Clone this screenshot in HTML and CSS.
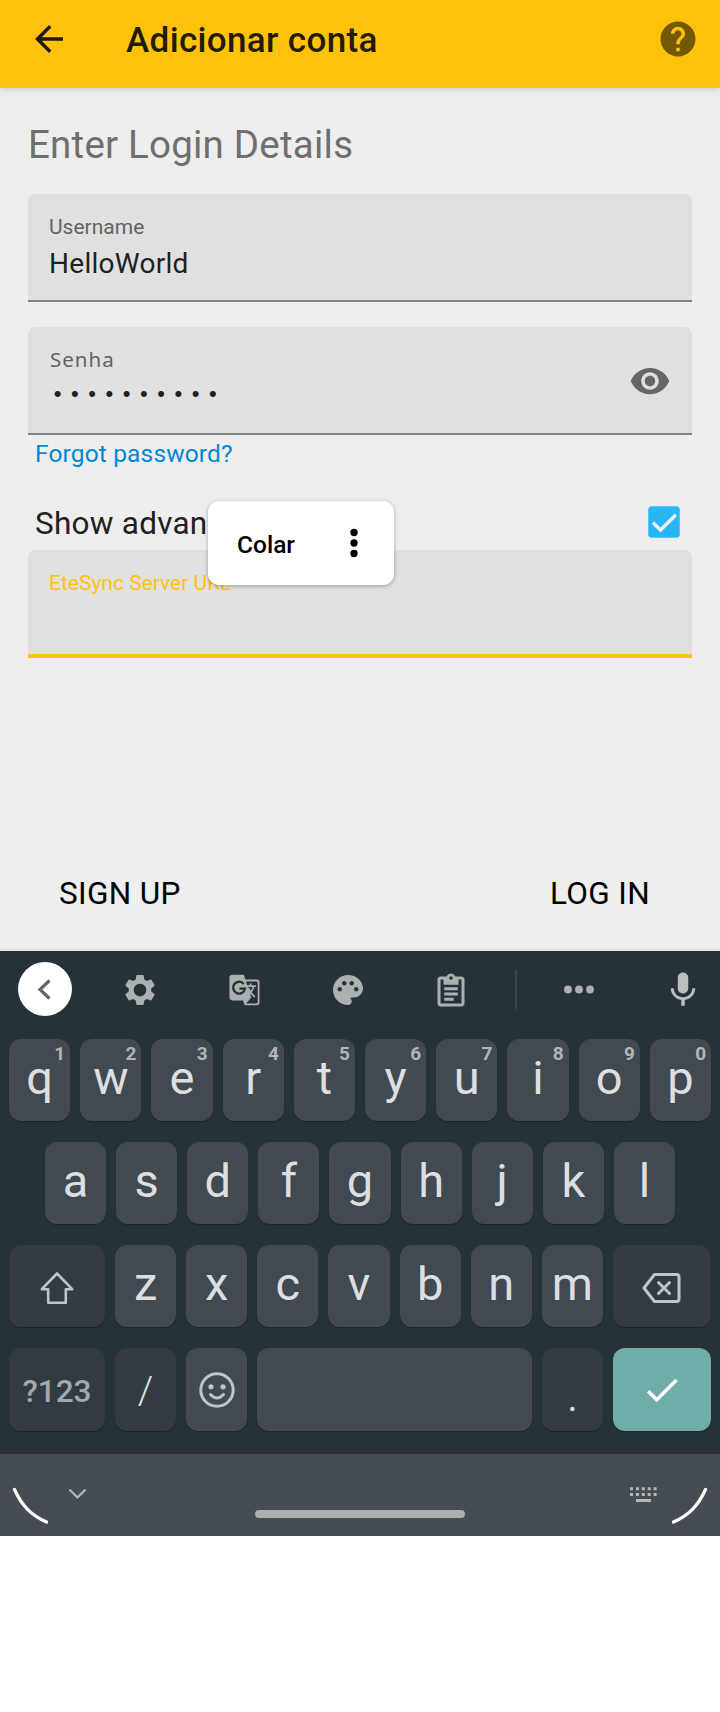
FILE: index.html
```html
<!DOCTYPE html>
<html lang="pt">
<head>
<meta charset="utf-8">
<title>Adicionar conta</title>
<link rel="stylesheet" href="styles.css">
</head>
<body>
<header class="appbar">
  <svg class="i42" viewBox="0 0 24 24"><path d="M20 11H7.83l5.59-5.59L12 4l-8 8 8 8 1.41-1.41L7.83 13H20z"/></svg>
  <h1 class="title">Adicionar conta</h1>
  <svg class="i42 help" viewBox="0 0 24 24"><path d="M12 2C6.48 2 2 6.48 2 12s4.48 10 10 10 10-4.48 10-10S17.52 2 12 2zm1 17h-2v-2h2v2zm2.07-7.75l-.9.92C13.45 12.9 13 13.5 13 15h-2v-.5c0-1.1.45-2.1 1.17-2.83l1.24-1.26c.37-.36.59-.86.59-1.41 0-1.1-.9-2-2-2s-2 .9-2 2H8c0-2.21 1.79-4 4-4s4 1.79 4 4c0 .88-.36 1.68-.93 2.25z"/></svg>
</header>
<main class="form">
  <h2 class="heading">Enter Login Details</h2>
  <div class="field">
    <div class="stack"><span class="label">Username</span><span class="value">HelloWorld</span></div>
  </div>
  <div class="field second">
    <div class="stack"><span class="label senha">Senha</span><span class="value dots">••••••••••</span></div>
    <svg class="i42 eye" viewBox="0 0 24 24"><path d="M12 4.5C7 4.5 2.73 7.61 1 12c1.73 4.39 6 7.5 11 7.5s9.27-3.11 11-7.5c-1.73-4.39-6-7.5-11-7.5zM12 17c-2.76 0-5-2.24-5-5s2.24-5 5-5 5 2.24 5 5-2.24 5-5 5zm0-8c-1.66 0-3 1.34-3 3s1.34 3 3 3 3-1.34 3-3-1.34-3-3-3z"/></svg>
  </div>
  <a class="forgot">Forgot password?</a>
  <div class="advanced">
    <span class="adv-text">Show advan</span>
    <svg class="i42 check" viewBox="0 0 24 24"><rect x="3" y="3" width="18" height="18" rx="2"/><path d="M5.700 12.300L10 16.600L18.800 7.800" fill="none" stroke="#eee" stroke-width="2"/></svg>
    <div class="popup"><span>Colar</span><svg class="i42" viewBox="0 0 24 24"><circle cx="12" cy="6" r="2.100"/><circle cx="12" cy="12" r="2.100"/><circle cx="12" cy="18" r="2.100"/></svg></div>
  </div>
  <div class="field active">
    <div class="stack"><span class="label">EteSync Server URL</span></div>
  </div>
  <div class="actions"><span>SIGN UP</span><span>LOG IN</span></div>
</main>
<section class="keyboard">
  <div class="tools">
    <div class="collapse"><svg viewBox="0 0 54 54"><path d="M31.500 18.500L22 27.500l9.500 9" fill="none" stroke="#666" stroke-width="3.200"/></svg></div>
    <svg class="i36 gear" viewBox="0 0 24 24"><path d="M19.430 12.980c.04-.32.07-.64.07-.98s-.03-.66-.07-.98l2.110-1.650c.19-.15.24-.42.12-.64l-2-3.460c-.12-.22-.39-.3-.61-.22l-2.490 1c-.52-.4-1.080-.73-1.690-.98l-.38-2.650C14.460 2.180 14.250 2 14 2h-4c-.25 0-.46.18-.49.42l-.38 2.650c-.61.25-1.170.59-1.690.98l-2.490-1c-.23-.09-.49 0-.61.22l-2 3.460c-.13.22-.07.49.12.64l2.110 1.650c-.04.32-.07.65-.07.98s.03.66.07.98l-2.110 1.650c-.19.15-.24.42-.12.64l2 3.460c.12.22.39.3.61.22l2.490-1c.52.4 1.080.73 1.690.98l.38 2.650c.03.24.24.42.49.42h4c.25 0 .46-.18.49-.42l.38-2.650c.61-.25 1.170-.59 1.690-.98l2.490 1c.23.09.49 0 .61-.22l2-3.460c.12-.22.07-.49-.12-.64l-2.110-1.650zM12 16.200c-2.300 0-4.200-1.900-4.200-4.200s1.900-4.200 4.200-4.200 4.200 1.900 4.200 4.200-1.900 4.200-4.200 4.200z"/></svg>
    <svg class="i36 translate" viewBox="0 0 26 26"><path fill-rule="evenodd" d="M4.500 2h8.300l1.200 3.500h8.200q2 0 2 2v14.500q0 2-2 2H13.500L12.300 20.500H4.500q-2 0-2-2V4q0-2 2-2zM14.400 6.800L18.200 18.500l-3.600 4.200h7.400q.9 0 .9-.9V7.700q0-.9-.9-.9z"/><path d="M12.800 8.600A4.300 4.300 0 1 0 13.700 12H9.700" fill="none" stroke="#263238" stroke-width="1.700"/><path d="M14 10.200h7.600M17.800 8.300v1.900M20 10.200q-1 4.500-5 7M16 11.500q1.500 4 4.800 6.500" fill="none" stroke="#abb0b3" stroke-width="1.300"/></svg>
    <svg class="i36 palette" viewBox="0 0 24 24"><path d="M12 2C6.490 2 2 6.490 2 12s4.490 10 10 10c1.380 0 2.500-1.120 2.500-2.500 0-.61-.23-1.200-.64-1.670-.08-.1-.13-.21-.13-.33 0-.28.22-.5.5-.5H16c3.310 0 6-2.690 6-6 0-4.960-4.490-9-10-9zm-5.500 11c-.83 0-1.500-.67-1.500-1.500S5.670 10 6.500 10s1.500.67 1.500 1.500S7.330 13 6.500 13zm3-4C8.670 9 8 8.330 8 7.500S8.670 6 9.500 6s1.500.67 1.500 1.500S10.330 9 9.500 9zm5 0c-.83 0-1.500-.67-1.500-1.500S13.670 6 14.500 6s1.500.67 1.500 1.500S15.330 9 14.500 9zm4.500 2.500c0 .83-.67 1.500-1.500 1.500s-1.500-.67-1.500-1.500.67-1.500 1.500-1.500 1.500.67 1.500 1.500z"/></svg>
    <svg class="i36 clip" viewBox="0 0 24 24"><path fill-rule="evenodd" d="M19 3h-4.180C14.400 1.840 13.300 1 12 1s-2.400.84-2.820 2H5c-1.100 0-2 .9-2 2v16c0 1.100.9 2 2 2h14c1.100 0 2-.9 2-2V5c0-1.100-.9-2-2-2zm-7-.2a1.200 1.200 0 1 1 0 2.400 1.200 1.200 0 0 1 0-2.400zM19 21H5V5h2v3.500h10V5h2v16z"/><path d="M7.500 10.200h9v1.900h-9zM7.500 13.700h9v1.900h-9zM7.500 17.200h6.300v1.900H7.500z"/></svg>
    <span class="divider"></span>
    <svg class="i36 more" viewBox="0 0 36 36"><circle cx="7" cy="17.500" r="3.900"/><circle cx="18" cy="17.500" r="3.900"/><circle cx="29" cy="17.500" r="3.900"/></svg>
    <svg class="i42 mic" viewBox="0 0 24 24"><path d="M12 14c1.660 0 3-1.340 3-3V5c0-1.660-1.340-3-3-3S9 3.340 9 5v6c0 1.660 1.340 3 3 3zm5.300-3c0 3-2.540 5.100-5.300 5.100S6.700 14 6.700 11H5c0 3.410 2.720 6.230 6 6.720V21h2v-3.280c3.280-.48 6-3.300 6-6.720h-1.700z"/></svg>
  </div>
  <div class="row">
    <div class="key">q<sup>1</sup></div><div class="key">w<sup>2</sup></div><div class="key">e<sup>3</sup></div><div class="key">r<sup>4</sup></div><div class="key">t<sup>5</sup></div><div class="key">y<sup>6</sup></div><div class="key">u<sup>7</sup></div><div class="key">i<sup>8</sup></div><div class="key">o<sup>9</sup></div><div class="key">p<sup>0</sup></div>
  </div>
  <div class="row home">
    <div class="key">a</div><div class="key">s</div><div class="key">d</div><div class="key">f</div><div class="key">g</div><div class="key">h</div><div class="key">j</div><div class="key">k</div><div class="key">l</div>
  </div>
  <div class="row">
    <div class="key dim wide icon"><svg class="line shift" viewBox="0 0 36 36"><path d="M18 3.500L2.800 19.200h6.400v13.500h17.600V19.200h6.400z"/></svg></div><div class="key">z</div><div class="key">x</div><div class="key">c</div><div class="key">v</div><div class="key">b</div><div class="key">n</div><div class="key">m</div><div class="key dim wider icon"><svg class="line del" viewBox="0 0 42 36"><path d="M13.500 4.500h22q2.500 0 2.500 2.500v22q0 2.500-2.500 2.500h-22L3 18zM17.500 12.500l11 11m0-11l-11 11"/></svg></div>
  </div>
  <div class="row last">
    <div class="key dim wide sym">?123</div><div class="key dim slash">/</div><div class="key icon smile"><svg class="line face" viewBox="0 0 36 36"><circle cx="18" cy="18" r="16.200"/><path d="M11.500 22.500q6.500 7 13 0"/><circle class="dot" cx="12" cy="14.800" r="2.600"/><circle class="dot" cx="24" cy="14.800" r="2.600"/></svg></div><div class="key space"></div><div class="key dim period">.</div><div class="key wider enter"><svg class="i42" viewBox="0 0 24 24"><path d="M9 16.170L4.830 12l-1.420 1.410L9 19 21 7l-1.410-1.410z"/></svg></div>
  </div>
</section>
<nav class="navbar">
  <svg viewBox="0 0 720 82"><g fill="none"><path d="M14.500 35.500C22 52 31 61 46.500 68M705.500 35.500C698 52 689 61 673.500 68" stroke="#fff" stroke-width="3.200" stroke-linecap="round"/><path d="M69.500 35.500l8 8 8-8" stroke="#b4b8ba" stroke-width="2.200"/><path d="M630 34.700h27M630 40.500h27" stroke="#b4b8ba" stroke-width="3" stroke-dasharray="3 2.900"/><path d="M636 46.500h15" stroke="#b4b8ba" stroke-width="3"/></g><rect x="255" y="56" width="210" height="8" rx="4" fill="#a9aeb0"/></svg>
</nav>
</body>
</html>
```
FILE: styles.css
```css
* { box-sizing: border-box; }
body { margin: 0; width: 720px; height: 1712px; background: #fff; font-family: Roboto, sans-serif; color: #212121; }
svg { display: block; flex: none; }
.i42 { width: 42px; height: 42px; }
.i36 { width: 36px; height: 36px; fill: #abb0b3; }
.appbar { height: 88px; background: #ffc20a; padding: 0 21px 10px 28px; display: flex; align-items: center; box-shadow: 0 2px 5px rgba(0,0,0,.12); position: relative; fill: #1f1a0b; }
.title { margin: 4px 0 0 56px; font-size: 35px; line-height: 42px; font-weight: 500; letter-spacing: .35px; color: #221b06; white-space: nowrap; }
.help { margin-left: auto; fill: #735805; }
.form { height: 863px; background: #eee; padding: 33px 28px 0; }
.heading { margin: 0; font-size: 38.5px; line-height: 48px; font-weight: 400; letter-spacing: .22px; color: #6f6f6f; }
.field { height: 108px; margin-top: 25px; background: #e0e0e0; border-bottom: 2px solid #828282; border-radius: 7px 7px 0 0; padding: 19px 21px 0; display: flex; justify-content: space-between; }
.stack { display: flex; flex-direction: column; }
.label { font-size: 21px; line-height: 28px; color: #636363; }
.value { font-size: 28px; line-height: 36px; margin-top: 5px; letter-spacing: .28px; }
.senha { font-family: "Noto Sans", sans-serif; font-size: 20.500px; line-height: 26px; letter-spacing: 1px; padding-left: 1px; }
.dots { font-family: "Liberation Mono", monospace; font-size: 22px; letter-spacing: 4.040px; padding-left: 2px; margin-top: 6px; }
.eye { margin-top: 14px; fill: #666; }
.forgot { display: block; margin: 4px 7px 0; font-size: 24.500px; line-height: 30px; letter-spacing: .15px; color: #0288d1; }
.advanced { position: relative; height: 42px; margin-top: 32px; padding: 0 7px 0 7px; display: flex; align-items: center; justify-content: space-between; }
.adv-text { font-size: 31.500px; line-height: 42px; letter-spacing: .25px; padding-top: 3px; }
.check { fill: #29b6f6; }
.popup { position: absolute; left: 180px; top: 0; width: 186px; height: 84px; background: #fff; border-radius: 11px; box-shadow: 0 1px 4px rgba(0,0,0,.3); display: flex; align-items: center; justify-content: space-between; padding: 0 19px 0 29px; font-size: 24.500px; font-weight: 500; color: #000; }
.popup span { padding-top: 2px; }
.active { margin-top: 7px; border-bottom: 4px solid #ffc20a; }
.active .label { color: #ffc20a; }
.actions { display: flex; justify-content: space-between; margin-top: 217px; padding: 0 42px 0 31px; font-size: 31.500px; line-height: 38px; letter-spacing: .35px; color: #000; }
.keyboard { height: 503px; background: #263238; padding: 11px 9px 0; box-shadow: 0 -1px 4px rgba(0,0,0,.08); }
.tools { height: 54px; display: flex; align-items: center; margin-left: 9px; }
.tools > svg { margin-top: 2px; }
.collapse { width: 54px; height: 54px; border-radius: 50%; background: #fff; }
.gear { margin-left: 50px; }
.translate { margin: 0 68px; }
.clip { margin-left: 67px; }
.divider { width: 2px; height: 39px; background: #3a454b; margin-left: 46px; }
.more { margin-left: 44px; }
.mic { margin-left: 65px; fill: #b9bec1; }
.row { display: flex; gap: 10px; height: 82px; margin-top: 21px; }
.tools + .row { margin-top: 23px; }
.home { padding: 0 36px; }
.key { position: relative; flex: 1 1 0; background: #424a51; border-radius: 12px; display: flex; justify-content: center; align-items: center; font-size: 47px; line-height: 78px; color: #dcdee0; box-shadow: 0 1px 1px rgba(0,0,0,.3); padding-bottom: 4px; }
.key sup { position: absolute; right: 5px; top: 4px; font-size: 19px; line-height: 22px; font-weight: 700; color: #b1b5b8; }
.dim { background: #313b41; }
.wide { flex: 0 0 96px; }
.wider { flex: 0 0 98px; }
.icon { padding: 3px 0 0; }
.smile { padding: 0; }
.last { height: 83px; }
.sym { font-size: 31.500px; font-weight: 500; color: #a3a8ac; padding: 5px 0 0; }
.slash { font-size: 39px; font-weight: 300; padding: 2px 0 0; }
.period { font-size: 38px; padding: 16px 0 0; }
.space { flex: 0 0 275px; }
.enter { background: #6fada8; fill: #fff; padding: 0; }
.line { width: 36px; height: 36px; fill: none; stroke: #c0c4c7; stroke-width: 3; stroke-linejoin: round; stroke-linecap: round; }
.shift { stroke-width: 2.600; }
.del { width: 42px; }
.line .dot { fill: #c0c4c7; stroke: none; }
.navbar { height: 82px; background: #454d52; }
```
